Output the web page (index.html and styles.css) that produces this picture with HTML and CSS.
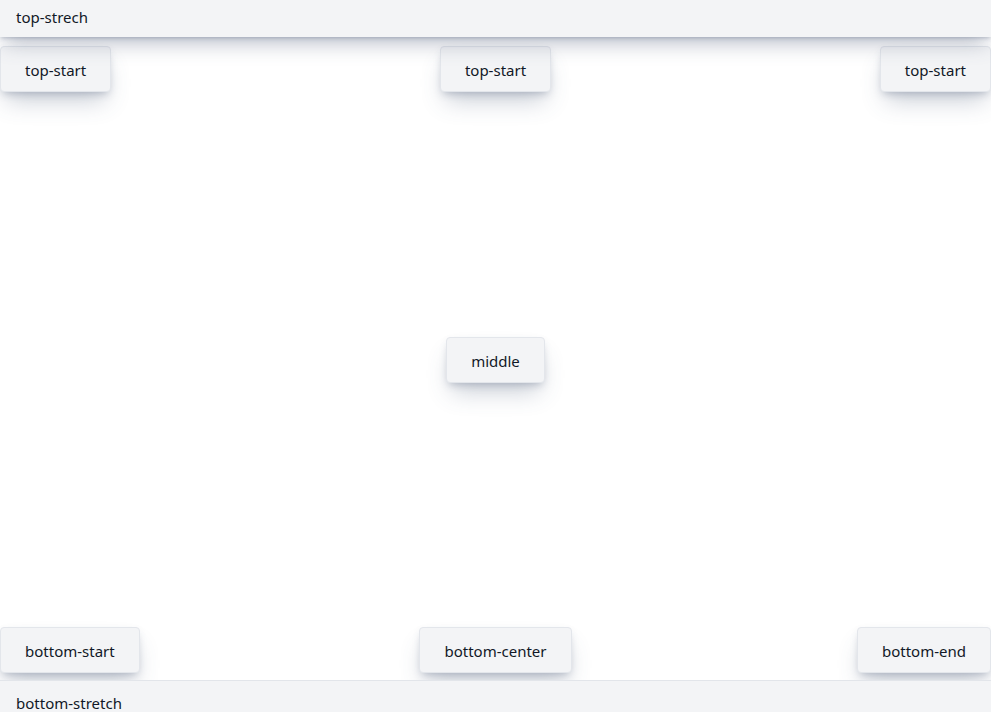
FILE: index.html
```html
<!DOCTYPE html>
<html lang="en">
<head>
<meta charset="utf-8">
<title>Toasts</title>
<link rel="stylesheet" href="styles.css">
</head>
<body>
<div class="screen">
  <div class="bar bar-top">top-strech</div>
  <div class="row row-top">
    <div class="toast start">top-start</div>
    <div class="toast">top-start</div>
    <div class="toast end">top-start</div>
  </div>
  <div class="middle">
    <div class="toast">middle</div>
  </div>
  <div class="row row-bottom">
    <div class="toast start">bottom-start</div>
    <div class="toast">bottom-center</div>
    <div class="toast end">bottom-end</div>
  </div>
  <div class="bar bar-bottom">bottom-stretch</div>
</div>
</body>
</html>
```
FILE: styles.css
```css
html, body {
  margin: 0;
  padding: 0;
  overflow: hidden;
  background: #ffffff;
}
body {
  font-family: "Noto Sans", "Open Sans", sans-serif;
  font-size: 15px;
  color: #111827;
}
.screen {
  height: 722px;
  display: flex;
  flex-direction: column;
}
.bar {
  background: #f3f4f6;
  padding: 0 16px;
  box-sizing: border-box;
}
.bar-top {
  height: 37px;
  line-height: 35px;
  box-shadow: 0 8px 22px -4px rgba(71, 85, 115, 0.45), 0 2px 4px -1px rgba(71, 85, 115, 0.3);
  position: relative;
  z-index: 1;
}
.bar-bottom {
  height: 42px;
  line-height: 45px;
  border-top: 1px solid #e2e5ea;
  margin-top: 7px;
}
.row {
  display: grid;
  grid-template-columns: 1fr auto 1fr;
  align-items: start;
}
.row .start { justify-self: start; }
.row .end { justify-self: end; }
.row-top {
  margin-top: 9px;
}
.middle {
  flex: 1;
  display: flex;
  align-items: center;
  justify-content: center;
}
.toast {
  background: #f3f4f6;
  border: 1px solid #e3e6eb;
  border-radius: 4px;
  height: 46px;
  box-sizing: border-box;
  padding: 0 24px;
  line-height: 46px;
  white-space: nowrap;
  box-shadow: 0 14px 24px -6px rgba(71, 85, 115, 0.3), 0 4px 8px -3px rgba(71, 85, 115, 0.35);
}
```
